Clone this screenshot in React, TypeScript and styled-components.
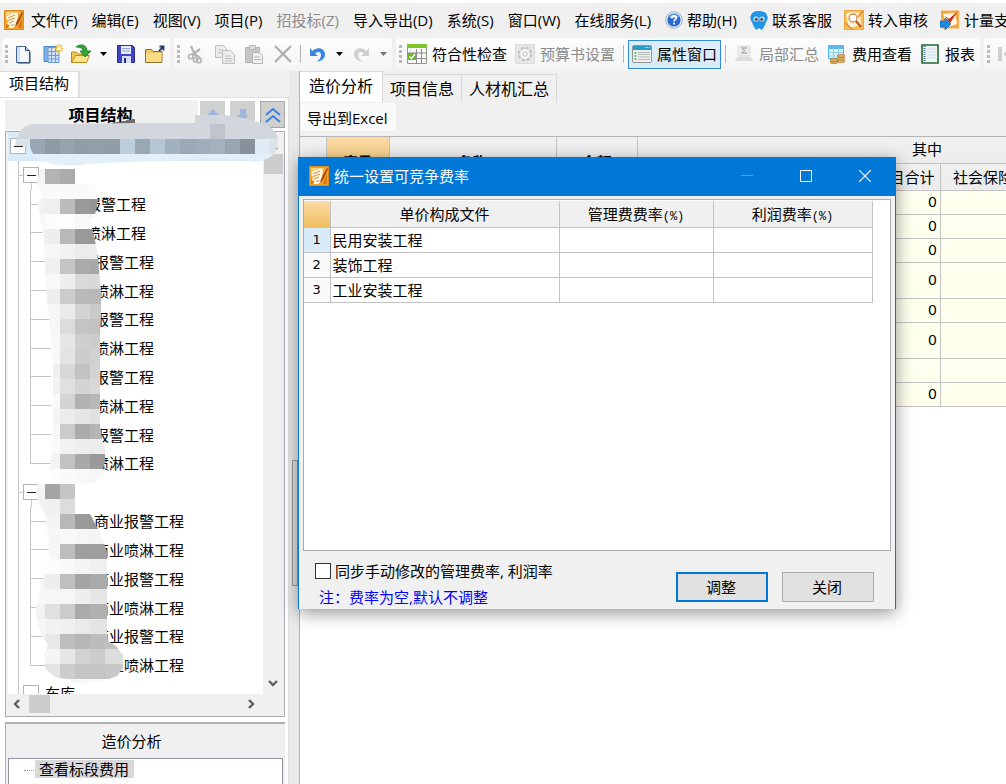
import React from 'react';
import styled, { createGlobalStyle, css } from 'styled-components';

const uiFont = '"Open Sans", "Noto Sans CJK SC", sans-serif';

const GlobalStyle = createGlobalStyle`
  * { box-sizing: border-box; }
  html, body { margin: 0; padding: 0; }
  body { background: #f0f0f0; color: #000; font: 15px/20px ${uiFont}; }
  button { font: inherit; color: inherit; border: 0; padding: 0; margin: 0; background: none; }
  svg { display: block; flex: none; }
`;

/* ---------- frame ---------- */

const Desktop = styled.div`
  position: relative;
  display: flex;
  flex-direction: column;
  height: 100vh;
  overflow: hidden;
  border-top: 3px solid #fff;
  white-space: nowrap;
`;

const MenuBar = styled.nav`
  display: flex;
  align-items: center;
  flex: none;
  height: 34px;
  padding-left: 4px;
`;

const MenuItem = styled.button<{ $icon?: boolean }>`
  display: flex;
  align-items: center;
  gap: 4px;
  flex: none;
  padding: 0 ${p => (p.$icon ? 6 : 7)}px;
  &:disabled { color: #8b8b8b; }
`;

const ToolBar = styled.div`
  display: flex;
  align-items: center;
  flex: none;
  height: 34px;
  padding-left: 2px;
  gap: 4px;
`;

const ToolGroup = styled.div`
  display: flex;
  align-items: center;
  flex: none;
  height: 32px;
  padding-right: 1px;
  border-radius: 3px;
  background: linear-gradient(#fdfdfd, #f4f4f4);
`;

const Grip = styled.span`
  width: 3px;
  height: 18px;
  margin: 0 1px 0 3px;
  background: repeating-linear-gradient(#b9b9b9 0 3px, transparent 3px 5px);
`;

const IconButton = styled.button`
  display: flex;
  align-items: center;
  justify-content: center;
  flex: none;
  width: 29px;
  height: 28px;
`;

const ArrowButton = styled(IconButton)`
  width: 15px;
`;

const ToolButton = styled.button<{ $active?: boolean }>`
  display: flex;
  align-items: center;
  gap: 5px;
  flex: none;
  height: 29px;
  padding: 0 4px;
  &:disabled { color: #8b8b8b; }
  ${p => p.$active && css`
    background: #dcebf8;
    box-shadow: inset 0 0 0 1px #2f8ad8;
  `}
`;

const Divider = styled.span<{ $wide?: boolean }>`
  flex: none;
  width: 1px;
  height: 18px;
  margin: ${p => (p.$wide ? '0 4px' : '0 2px 0 3px')};
  background: #b5b5b5;
`;

const Workspace = styled.div`
  display: flex;
  flex: 1;
  min-height: 0;
`;

/* ---------- side panel ---------- */

const Sidebar = styled.aside`
  position: relative;
  display: flex;
  flex-direction: column;
  flex: none;
  width: 289px;
`;

const SideTab = styled.button`
  align-self: flex-start;
  width: 80px;
  height: 26px;
  padding-bottom: 3px;
  background: #fff;
  border: solid #dedede;
  border-width: 1px 2px 0 0;
`;

const SidePanel = styled.div`
  display: flex;
  flex-direction: column;
  flex: 1;
  min-height: 0;
  padding: 2px 3px 0 5px;
  background: #fff;
  border: solid #e0e0e0;
  border-width: 1px 1px 0 0;
`;

const SideHeader = styled.div`
  display: flex;
  gap: 5px;
  flex: none;
  height: 31px;
  padding-bottom: 1px;
`;

const SideTitle = styled.h2`
  flex: 1;
  margin: 0 -3px 0 0;
  padding-right: 2px;
  font-size: 16px;
  line-height: 30px;
  text-align: center;
  background: #f0f0f0;
`;

const MoveButton = styled.button<{ $framed?: boolean }>`
  display: flex;
  align-items: center;
  justify-content: center;
  width: 25px;
  height: 27px;
  margin-top: 1px;
  background: #d0d0d0;
  border: 1px solid ${p => (p.$framed ? '#a8a8a8' : '#d0d0d0')};
`;

const TreeBox = styled.div`
  display: grid;
  grid-template: minmax(0, 1fr) 19px / 1fr 20px;
  flex: 1;
  min-height: 0;
  padding: 0 1px 3px 2px;
  background: #f0f0f0;
  border: 1px solid #a9acb3;
`;

const TreeView = styled.ul`
  display: grid;
  grid-template-rows: repeat(19, minmax(0, 2fr)) minmax(0, 1fr);
  margin: 0;
  padding: 0;
  list-style: none;
  background: #fff;
  overflow: hidden;
`;

const TreeRow = styled.li<{ $selected?: boolean }>`
  display: flex;
  background: ${p => (p.$selected ? '#d9ebf9' : 'transparent')};
`;

const Trunk = styled.span<{ $narrow?: boolean }>`
  flex: none;
  width: ${p => (p.$narrow ? 5 : 12)}px;
  margin-left: 10px;
  border-left: 1px solid #c6c6c6;
`;

const TrunkBranch = styled(Trunk)`
  background: linear-gradient(#c6c6c6, #c6c6c6) center / 100% 1px no-repeat;
`;

const Elbow = styled.span<{ $last?: boolean }>`
  flex: none;
  width: 21px;
  background:
    linear-gradient(#c6c6c6, #c6c6c6) 0 0 / 1px ${p => (p.$last ? '50%' : '100%')} no-repeat,
    linear-gradient(#c6c6c6, #c6c6c6) center / 100% 1px no-repeat;
`;

const ExpanderColumn = styled.span`
  display: flex;
  flex-direction: column;
  align-items: center;
  flex: none;
  width: 16px;
  &::before { content: ''; flex: 1; }
  &::after { content: ''; flex: 1; width: 1px; background: #c6c6c6; }
`;

const Expander = styled.button`
  display: flex;
  align-items: center;
  justify-content: center;
  width: 16px;
  height: 16px;
  background: #fff;
  border: 1px solid #b4b4b4;
  &::before { content: ''; width: 9px; height: 1px; background: #222; }
`;

const CutBox = styled.span`
  flex: none;
  width: 16px;
  height: 16px;
  margin-top: 5px;
  border: 1px solid #b4b4b4;
`;

const TreeLabel = styled.span<{ $indent: number }>`
  align-self: center;
  margin-left: ${p => p.$indent}px;
`;

const CutLabel = styled.span`
  margin-left: 6px;
  margin-top: 3px;
`;

const ScrollColumn = styled.div`
  display: flex;
  flex-direction: column;
  align-items: center;
  justify-content: space-between;
  padding: 10px 0 6px;
`;

const ScrollRow = styled.div`
  display: flex;
  align-items: center;
  grid-column: 1 / 3;
  padding: 0 27px 0 4px;
`;

const Thumb = styled.span<{ $row?: boolean }>`
  width: ${p => (p.$row ? 21 : 19)}px;
  height: ${p => (p.$row ? 18 : 20)}px;
  margin: ${p => (p.$row ? '0 auto 0 7px' : '2px 0 auto')};
  background: #cdcdcd;
`;

const CostPane = styled.section`
  flex: none;
  height: 62px;
  margin-top: 5px;
  padding: 0 2px;
  background: #f0f0f0;
  border: solid #b0b0b0;
  border-width: 2px 0 0 1px;
  overflow: hidden;
`;

const CostTitle = styled.h3`
  margin: 0;
  padding-right: 28px;
  font-size: 15px;
  font-weight: 400;
  line-height: 34px;
  text-align: center;
`;

const CostBox = styled.div`
  display: flex;
  align-items: flex-start;
  gap: 1px;
  height: 40px;
  padding: 1px 15px;
  background: #fff;
  border: 1px solid #8d93a0;
`;

const Dots = styled.span`
  width: 10px;
  margin-top: 10px;
  border-top: 1px dotted #999;
`;

const CostEntry = styled.a`
  padding: 0 5px 0 4px;
  line-height: 18px;
  color: #000;
  text-decoration: none;
  background: #d9d9d9;
`;

const Splitter = styled.div`
  display: flex;
  flex: none;
  align-items: center;
  width: 10px;
  padding: 191px 0 0 3px;
  background: #e9e9e9;
`;

const SplitHandle = styled.span`
  width: 6px;
  height: 126px;
  background: #e0e0e0;
  border: 1px solid #999;
`;

const MosaicLayer = styled.svg`
  position: absolute;
  left: 0;
  top: 0;
`;

/* ---------- main sheet ---------- */

const Main = styled.main`
  display: flex;
  flex-direction: column;
  flex: 1;
  min-width: 0;
  border-left: 1px solid #b4b4b8;
`;

const Tabs = styled.div`
  display: flex;
  align-items: flex-end;
  height: 31px;
  background: #f0f0f0;
`;

const Tab = styled.button<{ $active?: boolean }>`
  height: ${p => (p.$active ? 31 : 28)}px;
  padding: ${p => (p.$active ? '0 9px 2px' : '0 7px')};
  font-size: 16px;
  border: solid #d9d9d9;
  border-width: 1px 1px 0 0;
  background: ${p => (p.$active ? '#fff' : '#f0f0f0')};
`;

const ExportBar = styled.div`
  display: flex;
  height: 34px;
  padding: 1px 0 5px 1px;
  background: #f0f0f0;
`;

const ExportButton = styled.button`
  padding: 1px 8px 0 6px;
  background: #fafafa;
  border-radius: 3px;
`;

const SheetArea = styled.div`
  flex: 1;
  min-height: 0;
  overflow: hidden;
  background: #fff;
  border-top: 1px solid #b4b4b8;
`;

const Sheet = styled.table`
  width: 918px;
  margin: -1px 0 0 -1px;
  table-layout: fixed;
  border-collapse: collapse;
  th, td { padding: 0 3px; border: solid #c3c3c3; border-width: 0 1px 1px 0; }
  th { font-weight: 400; height: 27px; background: linear-gradient(#f0f0f0, #ececec); }
  td { background: #ffffee; text-align: right; line-height: 18px; font-family: "Liberation Sans", ${uiFont}; }
  td:first-child { background: #f0f0f0; }
`;

const TallTh = styled.th<{ $current?: boolean }>`
  && {
    padding-bottom: 2px;
    font-weight: 700;
    ${p => p.$current && 'background: linear-gradient(#fbdca6, #f4c263);'}
  }
`;

const SheetRow = styled.tr<{ $tall?: boolean }>`
  height: ${p => (p.$tall ? 36 : 24)}px;
`;

/* ---------- dialog ---------- */

const DialogWindow = styled.section`
  position: absolute;
  left: 298px;
  top: 154px;
  width: 598px;
  display: flex;
  flex-direction: column;
  background: #f0f0f0;
  border: solid #0078d7;
  border-width: 0 1px;
  box-shadow: 0 4px 16px rgba(0, 0, 0, 0.42);
`;

const TitleBar = styled.header`
  display: flex;
  align-items: center;
  gap: 5px;
  height: 39px;
  padding: 0 1px 1px 10px;
  color: #fff;
  background: #0078d7;
`;

const DialogTitle = styled.h1`
  flex: 1;
  margin: 0;
  font-size: 15px;
  font-weight: 400;
`;

const CaptionButton = styled.button`
  display: flex;
  align-items: center;
  justify-content: center;
  width: 59px;
  height: 38px;
  margin-left: -5px;
`;

const RateBox = styled.div`
  height: 352px;
  margin: 3px 4px 0;
  padding: 1px 0;
  background: #fff;
  border: 1px solid #a9acb3;
`;

const RateTable = styled.table`
  width: 568px;
  table-layout: fixed;
  border-collapse: collapse;
  th, td { padding: 0 2px; border: solid #c3c3c3; border-width: 0 1px 1px 0; height: 25px; }
  thead th { height: 26px; background: #f0f0f0; font-weight: 400; }
  thead th:first-child { background: linear-gradient(#fbdca6, #f0be60); }
`;

const RowNumber = styled.th<{ $current?: boolean }>`
  font: 13px/20px "DejaVu Sans", sans-serif;
  background: ${p => (p.$current ? '#d9ebf9' : '#fafafa')};
`;

const Unit = styled.span`
  font: 12px/12px "Liberation Mono", monospace;
`;

const DialogFooter = styled.footer`
  display: flex;
  justify-content: space-between;
  height: 58px;
  padding: 10px 21px 0 16px;
`;

const SyncLabel = styled.label`
  display: flex;
  align-items: center;
  gap: 4px;
  height: 20px;
`;

const CheckBox = styled.input`
  appearance: none;
  width: 16px;
  height: 16px;
  margin: 0;
  background: #fff;
  border: 1px solid #333;
`;

const Note = styled.p`
  margin: 6px 0 0 4px;
  color: #00f;
`;

const Actions = styled.div`
  display: flex;
  gap: 14px;
  padding-top: 11px;
`;

const ActionButton = styled.button<{ $primary?: boolean }>`
  width: 92px;
  height: 30px;
  padding-right: 2px;
  background: #e1e1e1;
  border: ${p => (p.$primary ? '2px solid #0078d7' : '1px solid #adadad')};
`;

/* ---------- icons ---------- */

const AppIcon = () => (
  <svg width="20" height="20" viewBox="0 0 20 20">
    <path d="M.500.500h19v19H.500z" fill="#f3a52e" stroke="#dd8a1c" />
    <path d="M2 2h13l-2 4-9 1-2 3z" fill="#fbd07c" />
    <path d="M2 13l4 5h-4zM14 18l4-11v11z" fill="#e0750f" />
    <path d="M2 7l5-3 5-1 2 2-2 10-3 3-5 0 2-3-3-1 1-3z" fill="#fff8e6" />
    <path d="M4 8l7-3M4 10.500l7-2.500M5 13l5-2M7 15.500l3-1" fill="none" stroke="#d98a3a" />
    <path d="M18 2l-6 11-1 4 3-3 5-11z" fill="#a3480c" />
  </svg>
);

const HelpIcon = () => (
  <svg width="18" height="18" viewBox="0 0 18 18">
    <circle cx="9" cy="9" r="8.3" fill="#e8eef6" stroke="#9fb0c6" />
    <circle cx="9" cy="9" r="6.6" fill="#2a68d0" />
    <path d="M4 6a6 6 0 0 1 10 0c-3 2-7 2-10 0z" fill="#7fb0f3" />
    <path d="M6.7 7.3c0-3.2 4.8-3 4.6-.3-.1 1.7-2.2 1.6-2.2 3.4" fill="none" stroke="#fff" strokeWidth="1.7" />
    <circle cx="9.1" cy="12.6" r="1.1" fill="#fff" />
  </svg>
);

const ServiceIcon = () => (
  <svg width="18" height="20" viewBox="0 0 18 20">
    <path d="M9 1c5 0 8 2 8 5 1 0 1 4-1 6-1 4-3 6-4 8l-3-2-3 2c-1-2-3-4-4-8-2-2-2-6-1-6 0-3 3-5 8-5z" fill="#2196e8" />
    <circle cx="6" cy="9" r="2.6" fill="#bfe4ff" /><circle cx="12" cy="9" r="2.6" fill="#bfe4ff" />
    <circle cx="6.3" cy="9.4" r="1.4" fill="#5a3b2c" /><circle cx="11.7" cy="9.4" r="1.4" fill="#5a3b2c" />
  </svg>
);

const AuditIcon = () => (
  <svg width="20" height="20" viewBox="0 0 20 20">
    <path d="M.500.500h19v19H.500z" fill="#f8bf55" stroke="#efa63a" />
    <path d="M2 4l5-2 9 1 1 12-12 3z" fill="#fdf3dd" />
    <circle cx="9" cy="8" r="4" fill="#fff" stroke="#c98c46" strokeWidth="1.3" />
    <path d="M12 11l5 6" stroke="#c4571b" strokeWidth="2.2" />
    <path d="M19 1l-5 6M1 13l7 6" stroke="#e88a2a" strokeWidth="1.6" />
  </svg>
);

const MeterIcon = () => (
  <svg width="20" height="20" viewBox="0 0 20 20">
    <path d="M1 .500h18v18H1z" fill="#f4a943" />
    <path d="M3 4l12-1 2 11-9 3z" fill="#fff4e0" />
    <path d="M5 6l4 3 9-8-8 12z" fill="#c32618" />
    <path d="M0 11h5V8l6 6-6 6v-3H0z" fill="#1b8ae0" stroke="#0b5cab" strokeWidth=".6" />
  </svg>
);

const NewIcon = () => (
  <svg width="15" height="19" viewBox="0 0 15 19">
    <path d="M.500 1.500h9l4 4v12h-13z" fill="#f2f7fc" stroke="#45638c" />
    <path d="M9.500 1.500v4h4" fill="#b8d0ec" stroke="#2c4d78" />
    <path d="M1 2h3v15H1z" fill="#cfdef0" />
    <path d="M14 7v11H2" fill="none" stroke="#24456f" />
  </svg>
);

const BookIcon = () => (
  <svg width="20" height="20" viewBox="0 0 20 20">
    <path d="M1 2.500h12v15H1z" fill="#7fb0e6" stroke="#4d87cc" />
    <path d="M5 3.500h11v15H5z" fill="#cfe2f7" stroke="#6a9ad2" />
    <path d="M5 7.500h11M5 11.500h11M5 15h11M8.500 4v15M12.500 4v15" stroke="#6d9bd2" />
    <path d="M16 0v9M11.500 4.500H20M12.800 1.300l6.400 6.400M19.200 1.300l-6.400 6.400" stroke="#f1c44a" strokeWidth="1.400" />
    <circle cx="16" cy="4.500" r="2" fill="#fff7c8" />
  </svg>
);

const OpenIcon = () => (
  <svg width="21" height="20" viewBox="0 0 21 20">
    <path d="M.500 18.500V8h5l2 2h7v8.500z" fill="#f2c552" stroke="#b98a1a" />
    <path d="M.500 18.500l4-7h14l-3 7z" fill="#fde488" stroke="#b98a1a" />
    <path d="M5 3c5-4 11-2 11 4h4l-6 6-5-6h3c0-3-3-4-7-4z" fill="#2fa836" stroke="#15741d" strokeWidth=".8" />
  </svg>
);

const SaveIcon = () => (
  <svg width="18" height="19" viewBox="0 0 18 19">
    <path d="M.500.500h15l2 2v15H.500z" fill="#3f43c4" stroke="#2b2f9a" />
    <path d="M4 1h10v8H4z" fill="#e6ebf8" /><path d="M5 3.500h8M5 6h8" stroke="#9aa3d8" />
    <path d="M5 11h9v7H5z" fill="#d9dcf3" /><path d="M7 13h2v5H7z" fill="#262a8c" />
  </svg>
);

const FolderIcon = () => (
  <svg width="20" height="19" viewBox="0 0 20 19">
    <path d="M.500 17.500v-13h6l1.500 2h9v11z" fill="#f0c75f" stroke="#8f7430" />
    <path d="M1 8h15.500v9H1z" fill="#f9dc86" />
    <path d="M14 6l4-4M14.500 1.500h4v4" fill="none" stroke="#2a3a63" strokeWidth="1.800" />
  </svg>
);

const CutIcon = () => (
  <svg width="17" height="19" viewBox="0 0 17 19" fill="none" stroke="#b3b3b3">
    <path d="M4 1l5 11M13 4L5 10M8 9l5 4" strokeWidth="2.200" />
    <circle cx="3.800" cy="11.500" r="2.300" strokeWidth="1.600" /><circle cx="12" cy="15.500" r="2.300" strokeWidth="1.600" /><circle cx="8.500" cy="15" r="2" strokeWidth="1.400" />
  </svg>
);

const CopyIcon = () => (
  <svg width="20" height="19" viewBox="0 0 20 19" fill="#ececec" stroke="#bdbdbd">
    <path d="M.500.500h8l3 3v9H.500z" /><path d="M7.500 5.500h8l4 4v9h-12z" />
    <path d="M3 5h5M3 8h4M10 11h6M10 13.500h7M10 16h7" />
  </svg>
);

const PasteIcon = () => (
  <svg width="18" height="19" viewBox="0 0 18 19" fill="#c6c6c6" stroke="#b5b5b5">
    <path d="M.500 2.500h14v15H.500z" /><path d="M4.500.500h6v4h-6z" fill="#ddd" />
    <path d="M7.500 7.500h7l3 3v8h-10z" fill="#f0f0f0" /><path d="M9 12h6M9 14.500h7" />
  </svg>
);

const DeleteIcon = () => (
  <svg width="18" height="18" viewBox="0 0 18 18">
    <path d="M1 1l16 16M17 1L1 17" stroke="#b0b0b0" strokeWidth="2.400" />
  </svg>
);

const UndoIcon = ({ redo }: { redo?: boolean }) => (
  <svg width="17" height="17" viewBox="0 0 17 17" transform={redo ? 'scale(-1 1)' : undefined}>
    <path d="M1 2v8h8L6 7.500C8.500 5 12 5.500 12 9c0 3-2 5-4 6.500 5-.500 8-3 8-7.500C16 2 8 0 3.500 5z" fill={redo ? '#cfcfcf' : '#3b86e0'} />
  </svg>
);

const DropIcon = ({ faded }: { faded?: boolean }) => (
  <svg width="7" height="4" viewBox="0 0 7 4"><path d="M0 0h7L3.500 4z" fill={faded ? '#777' : '#000'} /></svg>
);

const CheckSheetIcon = () => (
  <svg width="20" height="20" viewBox="0 0 20 20">
    <path d="M.500.500h19v19H.500z" fill="#f7f7f7" stroke="#8f9a86" />
    <path d="M0 0h20v4H0z" fill="#7cc62a" />
    <path d="M1 9h18M1 14.500h18M9.500 5v15M14.500 5v15" stroke="#8a8a8a" />
    <path d="M1 9h8v7H1z" fill="#6cb52c" /><path d="M2.500 12.500l2 2 3.500-4.500" fill="none" stroke="#fff" strokeWidth="1.400" />
  </svg>
);

const GearIcon = () => (
  <svg width="20" height="20" viewBox="0 0 20 20">
    <path d="M.500.500h19v19H.500z" fill="#e6e6e6" stroke="#dadada" />
    <circle cx="10" cy="10" r="6.300" fill="#fafafa" stroke="#c2c2c2" strokeWidth="2" strokeDasharray="3.200 1.700" />
    <circle cx="10" cy="10" r="5.300" fill="#fafafa" stroke="#cdcdcd" />
    <circle cx="10" cy="10" r="2.200" fill="#fff" stroke="#bbb" />
  </svg>
);

const PropertyIcon = () => (
  <svg width="20" height="18" viewBox="0 0 20 18">
    <rect x=".500" y=".500" width="19" height="17" rx="1" fill="#f1f1ee" stroke="#8d9496" />
    <path d="M1 1h18v4H1z" fill="#2a9bc4" /><path d="M13 2.500h1M15 2.500h1M17 2.500h1" stroke="#fff" />
    <path d="M2.500 8h2M2.500 11h2M2.500 14h2" stroke="#3bb54a" strokeWidth="1.300" />
    <path d="M6 7.500h12M6 9.500h12M6 12h12M6 14.500h12" stroke="#b3b8b8" />
  </svg>
);

const SumIcon = () => (
  <svg width="20" height="18" viewBox="0 0 20 18">
    <path d="M4 1h12v10H4z" fill="#ececec" stroke="#dcdcdc" />
    <path d="M13 3H8l2.500 2.500L8 8h5" fill="none" stroke="#b3b3b3" strokeWidth="1.300" />
    <path d="M3 12h14l2 4H1z" fill="#dcdcdc" />
  </svg>
);

const CostIcon = () => (
  <svg width="20" height="20" viewBox="0 0 20 20">
    <path d="M1.500 1.500h15v13h-15z" fill="#dff1fb" stroke="#56b4e4" /><path d="M1 1h16v4H1z" fill="#57b9ec" />
    <path d="M2 8.500h14M2 12h14M6.500 4v11M11.500 4v11" stroke="#8fd0f0" />
    <g fill="#dfb062" stroke="#a9762a" strokeWidth=".700">
      <ellipse cx="7" cy="18" rx="4" ry="1.600" /><ellipse cx="7" cy="16" rx="4" ry="1.600" />
      <ellipse cx="14" cy="17" rx="4" ry="1.600" /><ellipse cx="14" cy="14.500" rx="4" ry="1.600" /><ellipse cx="14" cy="12" rx="4" ry="1.600" />
    </g>
  </svg>
);

const ReportIcon = () => (
  <svg width="20" height="20" viewBox="0 0 20 20">
    <path d="M2 1h16v18H2z" fill="#eef5f4" stroke="#1d6b2c" strokeWidth="1.600" />
    <path d="M4.500 2v16" stroke="#4a6f9a" strokeDasharray="1 1" strokeWidth="2" />
    <path d="M7 5h9M7 8h9M7 11h9M7 14h9" stroke="#cbdbe8" />
  </svg>
);

const Chevron = ({ d }: { d: string }) => (
  <svg width="10" height="10" viewBox="0 0 10 10"><path d={d} fill="none" stroke="#606060" strokeWidth="2.400" /></svg>
);

/* ---------- mosaic over the project names ---------- */

const bandColors = ['#9aa7b3', '#8e9ba5', '#96a3ad', '#8f9da7', '#929fa9', '#909da7', '#bccddb', '#9aa8b3',
  '#b6c6d4', '#a2b1bd', '#9aa9b5', '#9fadb9', '#a5b1bd', '#98a6b1', '#87919b', '#e0ebf5'];

/* one line per 15px band, grey levels for the columns from x = 30 */
const greys = [
  'f4 b3 ab fd', 'f9 fa fa fa fa', 'f2 ef bb 99 96', 'f8 fc fd f8 f4', 'f6 ee b8 99 99', 'f8 f6 f2 ec ec',
  'f6 f0 c5 ab a8', 'fc f8 ee da d8', 'f8 ee cb b9 b8', 'fa f6 ea d4 ca', 'fa f6 dc c4 c2', 'fa f8 e6 cf cc',
  'fa f8 e3 cd d0', 'fa f0 d8 c2 d3', 'fa f2 e0 d4 d8', 'fc fa d4 b2 b8', 'fa f4 ec e6 e0', 'fa f8 cb ab b5',
  'fc fa f2 ee ec', 'fa f4 c2 a8 9a 9a', 'fa fc fa f8 f6 f6', 'f4 a4 c5 fd fd', 'f2 f0 dc fd fd', 'fa f4 b8 9a 96',
  'fa f6 f8 f6 f4 f2', 'fa f6 bd 9e 9e 9e', 'fa fc fa f4 f0 f0', 'f4 ee bf a4 aa aa', 'f8 f6 f6 ee e6 e6',
  'f2 e0 cb aa b0 b0', 'f6 f2 f0 ea e4 e4', 'f2 e8 bd b6 bc c0', 'fa f5 e6 d2 cc dd dd', 'fa e4 cc c5 c5 c8 c8',
  'fa fa f4 f8 fa fa',
].map(line => line.split(' '));

const Mosaic = () => (
  <MosaicLayer width="289" height="640" viewBox="0 71 289 640" shapeRendering="crispEdges" aria-hidden="true">
    <defs>
      <clipPath id="band">
        <path d="M15 146c2-14 8-20 16-22h29l75-1h60v-8h30c20 3 48 8 52 20 3 14-3 22-14 25l-8 2c-22-6-60-3-100-1-40 2-65 2-72 4-20 2-50 0-53-19z" />
      </clipPath>
      <clipPath id="names">
        <path d="M40 169H75V184H95L98 200 96 212 90 220 93 232 97 250 99 270 101 290 101 315 100 335 100 425 102 439 105 450 105 462 101 475 94 482 85 484H75V514H90L98 529 103 540 107 552V640L116 646 123 655 123 668 117 676 104 681 75 684 70 680 55 677 45 668 44 655 48 645 42 636 37 622 36 606 40 590 45 572 49 558 49 544 47 529 45 514 39 504 36 492 38 484H56L50 470 51 454 53 436 53 365 51 334 48 310 46 289 45 262 43 235 40 217 38 203 42 195 37 184Z" />
      </clipPath>
    </defs>
    <path d="M108 124l20-4 7-1v5z" fill="#707070" />
    <g clipPath="url(#band)">
      <path d="M0 110h289v29H0z" fill="#d2d7dd" />
      <path d="M0 139h289v15H0z" fill="#dbe2e9" />
      <path d="M0 154h289v16H0z" fill="#e4f0f9" />
      <path d="M210 124h15v15h-15z" fill="#bfc4ce" />
      {bandColors.map((c, i) => <rect key={i} x={30 + i * 15} y={139} width={15} height={15} fill={c} />)}
    </g>
    <g clipPath="url(#names)">
      {greys.map((line, r) => line.map((g, c) => (
        <rect key={`${r}-${c}`} x={30 + c * 15} y={169 + r * 15} width={15} height={15} fill={`#${g}${g}${g}`} />
      )))}
    </g>
  </MosaicLayer>
);

/* ---------- data ---------- */

const residential = ['报警工程', '喷淋工程', '报警工程', '喷淋工程', '报警工程', '喷淋工程', '报警工程', '喷淋工程', '报警工程', '喷淋工程'];
const commercial = ['商业报警工程', '商业喷淋工程', '商业报警工程', '商业喷淋工程', '商业报警工程', '商业喷淋工程'];

const sheetRows = [
  { value: '0' }, { value: '0' }, { value: '0' }, { value: '0', tall: true },
  { value: '0' }, { value: '0', tall: true }, { value: '' }, { value: '0' },
];

const rateRows = ['民用安装工程', '装饰工程', '工业安装工程'];

const GroupRow = () => (
  <TreeRow>
    <TrunkBranch $narrow />
    <ExpanderColumn><Expander aria-label="折叠" /></ExpanderColumn>
  </TreeRow>
);

const Leaf = ({ name, indent, last }: { name: string; indent: number; last: boolean }) => (
  <TreeRow>
    <Trunk />
    <Elbow $last={last} />
    <TreeLabel $indent={indent}>{name}</TreeLabel>
  </TreeRow>
);

export default function App() {
  return (
    <Desktop>
      <GlobalStyle />
      <MenuBar>
        <AppIcon />
        <MenuItem>文件(F)</MenuItem>
        <MenuItem>编辑(E)</MenuItem>
        <MenuItem>视图(V)</MenuItem>
        <MenuItem>项目(P)</MenuItem>
        <MenuItem disabled>招投标(Z)</MenuItem>
        <MenuItem>导入导出(D)</MenuItem>
        <MenuItem>系统(S)</MenuItem>
        <MenuItem>窗口(W)</MenuItem>
        <MenuItem>在线服务(L)</MenuItem>
        <MenuItem><HelpIcon />帮助(H)</MenuItem>
        <MenuItem $icon><ServiceIcon />联系客服</MenuItem>
        <MenuItem $icon><AuditIcon />转入审核</MenuItem>
        <MenuItem $icon><MeterIcon />计量支付</MenuItem>
      </MenuBar>

      <ToolBar>
        <ToolGroup>
          <Grip />
          <IconButton aria-label="新建"><NewIcon /></IconButton>
          <IconButton aria-label="新建项目"><BookIcon /></IconButton>
          <IconButton aria-label="打开"><OpenIcon /></IconButton>
          <ArrowButton aria-label="最近文件"><DropIcon /></ArrowButton>
          <IconButton aria-label="保存"><SaveIcon /></IconButton>
          <IconButton aria-label="另存"><FolderIcon /></IconButton>
        </ToolGroup>
        <ToolGroup>
          <Grip />
          <IconButton aria-label="剪切" disabled><CutIcon /></IconButton>
          <IconButton aria-label="复制" disabled><CopyIcon /></IconButton>
          <IconButton aria-label="粘贴" disabled><PasteIcon /></IconButton>
          <IconButton aria-label="删除" disabled><DeleteIcon /></IconButton>
          <Divider />
          <IconButton aria-label="撤销"><UndoIcon /></IconButton>
          <ArrowButton aria-label="撤销列表"><DropIcon /></ArrowButton>
          <IconButton aria-label="恢复" disabled><UndoIcon redo /></IconButton>
          <ArrowButton aria-label="恢复列表"><DropIcon faded /></ArrowButton>
        </ToolGroup>
        <ToolGroup>
          <Grip />
          <ToolButton><CheckSheetIcon />符合性检查</ToolButton>
          <ToolButton disabled><GearIcon />预算书设置</ToolButton>
          <Divider $wide />
          <ToolButton $active><PropertyIcon />属性窗口</ToolButton>
          <Divider $wide />
          <ToolButton disabled><SumIcon />局部汇总</ToolButton>
          <ToolButton><CostIcon />费用查看</ToolButton>
          <ToolButton><ReportIcon />报表</ToolButton>
        </ToolGroup>
        <ToolGroup>
          <Grip />
          <IconButton aria-label="首行" disabled>
            <svg width="16" height="16" viewBox="0 0 16 16"><path d="M0 1h4v14H0zM14 1v14L5 8z" fill="#cfcfcf" /></svg>
          </IconButton>
        </ToolGroup>
      </ToolBar>

      <Workspace>
        <Sidebar>
          <SideTab>项目结构</SideTab>
          <SidePanel>
            <SideHeader>
              <SideTitle>项目结构</SideTitle>
              <MoveButton aria-label="上移">
                <svg width="14" height="12" viewBox="0 0 14 12"><path d="M7 0l6 6h-3v6H4V6H1z" fill="#9fb6de" /></svg>
              </MoveButton>
              <MoveButton aria-label="下移">
                <svg width="14" height="12" viewBox="0 0 14 12"><path d="M7 12l6-6h-3V0H4v6H1z" fill="#9fb6de" /></svg>
              </MoveButton>
              <MoveButton $framed aria-label="收起">
                <svg width="16" height="16" viewBox="0 0 16 16"><path d="M1 8l7-6 7 6M1 15l7-6 7 6" fill="none" stroke="#3f83dc" strokeWidth="2" /></svg>
              </MoveButton>
            </SideHeader>

            <TreeBox>
              <TreeView>
                <TreeRow $selected>
                  <TreeLabel $indent={2}><Expander aria-label="折叠" /></TreeLabel>
                </TreeRow>
                <GroupRow />
                {residential.map((name, i) => (
                  <Leaf key={i} name={name} indent={i < 2 ? 35 : 43} last={i === residential.length - 1} />
                ))}
                <GroupRow />
                {commercial.map((name, i) => (
                  <Leaf key={i} name={name} indent={43} last={i === commercial.length - 1} />
                ))}
                <TreeRow>
                  <Trunk $narrow />
                  <CutBox />
                  <CutLabel>车库</CutLabel>
                </TreeRow>
              </TreeView>
              <ScrollColumn>
                <Chevron d="M1 7l4-4 4 4" />
                <Thumb />
                <Chevron d="M1 3l4 4 4-4" />
              </ScrollColumn>
              <ScrollRow>
                <Chevron d="M7 1L3 5l4 4" />
                <Thumb $row />
                <Chevron d="M3 1l4 4-4 4" />
              </ScrollRow>
            </TreeBox>

            <CostPane>
              <CostTitle>造价分析</CostTitle>
              <CostBox>
                <Dots />
                <CostEntry href="#cost">查看标段费用</CostEntry>
              </CostBox>
            </CostPane>
          </SidePanel>
          <Mosaic />
        </Sidebar>

        <Splitter><SplitHandle /></Splitter>

        <Main>
          <Tabs>
            <Tab $active>造价分析</Tab>
            <Tab>项目信息</Tab>
            <Tab>人材机汇总</Tab>
          </Tabs>
          <ExportBar><ExportButton>导出到Excel</ExportButton></ExportBar>
          <SheetArea>
            <Sheet>
              <colgroup>
                {[27, 63, 167, 81, 101, 101, 101, 101, 88, 88].map((w, i) => <col key={i} width={w} />)}
              </colgroup>
              <thead>
                <tr>
                  <th rowSpan={2} />
                  <TallTh $current rowSpan={2}>序号</TallTh>
                  <TallTh rowSpan={2}>名称</TallTh>
                  <TallTh rowSpan={2}>金额</TallTh>
                  <th colSpan={6}>其中</th>
                </tr>
                <tr>
                  <th /><th />
                  <th>措施项目合计</th>
                  <th>社会保险费</th>
                  <th /><th />
                </tr>
              </thead>
              <tbody>
                {sheetRows.map((row, i) => (
                  <SheetRow key={i} $tall={row.tall}>
                    <td /><td /><td /><td /><td /><td />
                    <td>{row.value}</td>
                    <td /><td /><td />
                  </SheetRow>
                ))}
              </tbody>
            </Sheet>
          </SheetArea>
        </Main>
      </Workspace>

      <DialogWindow role="dialog" aria-labelledby="dialog-title">
        <TitleBar>
          <AppIcon />
          <DialogTitle id="dialog-title">统一设置可竞争费率</DialogTitle>
          <CaptionButton aria-label="最小化" disabled>
            <svg width="12" height="12" viewBox="0 0 12 12"><path d="M0 5.500h12" stroke="#4ba0e3" /></svg>
          </CaptionButton>
          <CaptionButton aria-label="最大化">
            <svg width="12" height="12" viewBox="0 0 12 12"><path d="M.500.500h11v11H.500z" fill="none" stroke="#fff" /></svg>
          </CaptionButton>
          <CaptionButton aria-label="关闭窗口">
            <svg width="12" height="12" viewBox="0 0 12 12"><path d="M0 0l12 12M12 0L0 12" stroke="#fff" strokeWidth="1.200" /></svg>
          </CaptionButton>
        </TitleBar>
        <RateBox>
          <RateTable>
            <colgroup>
              <col width={26} /><col width={229} /><col width={154} /><col width={159} />
            </colgroup>
            <thead>
              <tr>
                <th />
                <th>单价构成文件</th>
                <th>管理费费率<Unit>(%)</Unit></th>
                <th>利润费率<Unit>(%)</Unit></th>
              </tr>
            </thead>
            <tbody>
              {rateRows.map((name, i) => (
                <tr key={name}>
                  <RowNumber $current={i === 0}>{i + 1}</RowNumber>
                  <td>{name}</td>
                  <td />
                  <td />
                </tr>
              ))}
            </tbody>
          </RateTable>
        </RateBox>
        <DialogFooter>
          <div>
            <SyncLabel><CheckBox type="checkbox" />同步手动修改的管理费率, 利润率</SyncLabel>
            <Note>注：费率为空,默认不调整</Note>
          </div>
          <Actions>
            <ActionButton $primary>调整</ActionButton>
            <ActionButton>关闭</ActionButton>
          </Actions>
        </DialogFooter>
      </DialogWindow>
    </Desktop>
  );
}
